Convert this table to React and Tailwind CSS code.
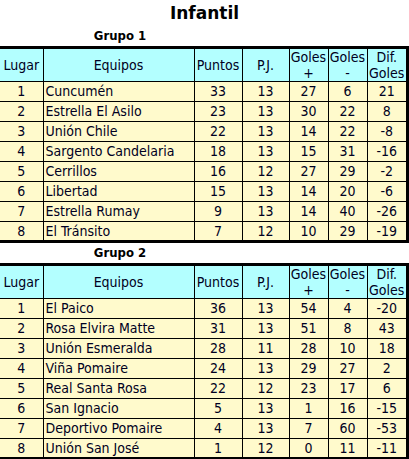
const grupo1 = [
  [1, 'Cuncumén', 33, 13, 27, 6, 21],
  [2, 'Estrella El Asilo', 23, 13, 30, 22, 8],
  [3, 'Unión Chile', 22, 13, 14, 22, -8],
  [4, 'Sargento Candelaria', 18, 13, 15, 31, -16],
  [5, 'Cerrillos', 16, 12, 27, 29, -2],
  [6, 'Libertad', 15, 13, 14, 20, -6],
  [7, 'Estrella Rumay', 9, 13, 14, 40, -26],
  [8, 'El Tránsito', 7, 12, 10, 29, -19],
]

const grupo2 = [
  [1, 'El Paico', 36, 13, 54, 4, -20],
  [2, 'Rosa Elvira Matte', 31, 13, 51, 8, 43],
  [3, 'Unión Esmeralda', 28, 11, 28, 10, 18],
  [4, 'Viña Pomaire', 24, 13, 29, 27, 2],
  [5, 'Real Santa Rosa', 22, 12, 23, 17, 6],
  [6, 'San Ignacio', 5, 13, 1, 16, -15],
  [7, 'Deportivo Pomaire', 4, 13, 7, 60, -53],
  [8, 'Unión San José', 1, 12, 0, 11, -11],
]

const th = 'border border-black bg-[#b3ffff] font-normal leading-[16px] px-0'
const td = 'border border-black text-center h-[20px] p-0 leading-[17px]'

function Tabla({ filas }) {
  return (
    <table className="border-collapse border-[3px] border-l-0 border-black w-[409px] table-fixed text-[14px] text-[#000022]">
      <colgroup>
        <col className="w-[43px]" />
        <col className="w-[151px]" />
        <col className="w-[48px]" />
        <col className="w-[47px]" />
        <col className="w-[39px]" />
        <col className="w-[39px]" />
        <col />
      </colgroup>
      <thead>
        <tr className="h-[34px]">
          <th className={th + ' border-l-0'}>Lugar</th>
          <th className={th}>Equipos</th>
          <th className={th}>Puntos</th>
          <th className={th}>P.J.</th>
          <th className={th}>Goles<br />+</th>
          <th className={th}>Goles<br />-</th>
          <th className={th}>Dif.<br />Goles</th>
        </tr>
      </thead>
      <tbody className="bg-[#fffacc]">
        {filas.map((f) => (
          <tr key={f[0]}>
            <td className={td + ' border-l-0'}>{f[0]}</td>
            <td className={td + ' text-left pl-[2px]'}>{f[1]}</td>
            <td className={td}>{f[2]}</td>
            <td className={td}>{f[3]}</td>
            <td className={td}>{f[4]}</td>
            <td className={td}>{f[5]}</td>
            <td className={td}>{f[6]}</td>
          </tr>
        ))}
      </tbody>
    </table>
  )
}

export default function App() {
  return (
    <div className="w-[409px] h-[459px] bg-white overflow-hidden font-['DejaVu_Sans_Condensed','DejaVu_Sans',sans-serif] text-black">
      <h1 className="text-center font-bold text-[17px] leading-[20px] pt-[3px] font-['DejaVu_Sans','Liberation_Sans',sans-serif]">Infantil</h1>
      <div className="w-[240px] text-center font-bold text-[13px] leading-[16px] pt-[5px] pb-[2px]">Grupo 1</div>
      <Tabla filas={grupo1} />
      <div className="w-[240px] text-center font-bold text-[13px] leading-[16px] pt-[2px] pb-[2px]">Grupo 2</div>
      <Tabla filas={grupo2} />
    </div>
  )
}
